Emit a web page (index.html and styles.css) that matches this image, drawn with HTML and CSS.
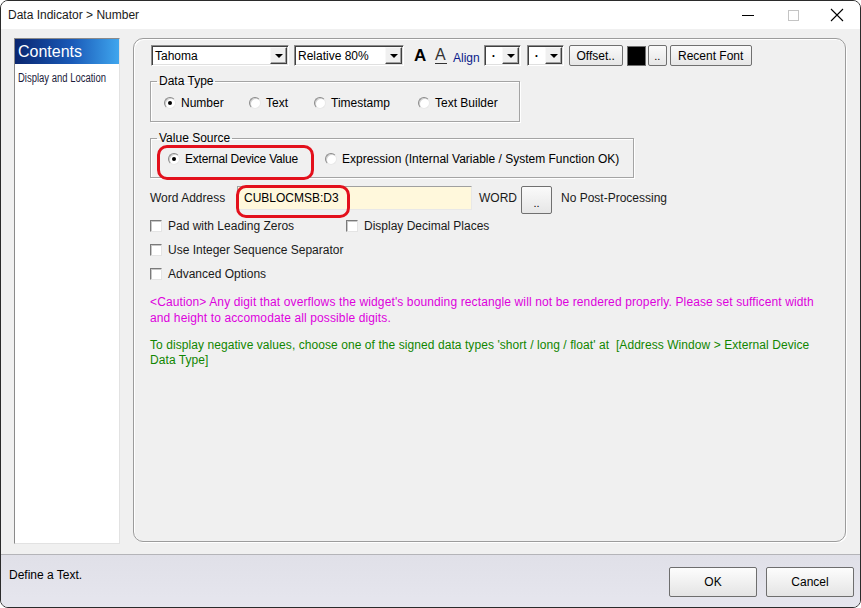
FILE: index.html
```html
<!DOCTYPE HTML>
<html>

<head>
  <meta charset="utf-8">
  <link rel="stylesheet" href="styles.css">
</head>

<body>
<div class="window">
  <div class="titlebar">
    <span class="title">Data Indicator &gt; Number</span>
    <div class="caption-btns">
      <svg class="cap cap-min" width="14" height="14" viewBox="0 0 14 14"><path d="M1 7.5h12" stroke="#000" stroke-width="1"/></svg>
      <svg class="cap cap-max" width="14" height="14" viewBox="0 0 14 14"><rect x="2.5" y="2.5" width="10" height="10" fill="none" stroke="#c4c4c4"/></svg>
      <svg class="cap cap-close" width="14" height="14" viewBox="0 0 14 14"><path d="M1 1l12 12M13 1L1 13" stroke="#000" stroke-width="1.1"/></svg>
    </div>
  </div>

  <div class="main">
    <div class="side">
      <div class="side-head">Contents</div>
      <div class="side-item"><span>Display and Location</span></div>
    </div>

    <div class="panel">
      <div class="toolbar">
        <div class="combo combo-font"><span class="combo-text">Tahoma</span><span class="drop"></span></div>
        <div class="combo combo-size"><span class="combo-text">Relative 80%</span><span class="drop"></span></div>
        <span class="glyph-bold">A</span>
        <span class="glyph-under">A</span>
        <span class="align-label">Align</span>
        <div class="combo combo-align"><span class="combo-text">·</span><span class="drop"></span></div>
        <div class="combo combo-align second"><span class="combo-text">·</span><span class="drop"></span></div>
        <button class="btn btn-offset">Offset..</button>
        <span class="swatch"></span>
        <button class="btn btn-dots">..</button>
        <button class="btn btn-recent">Recent Font</button>
      </div>

      <fieldset class="group group-type">
        <legend>Data Type</legend>
        <div class="radios radios-type">
          <label class="radio"><span class="dot checked"></span>Number</label>
          <label class="radio"><span class="dot"></span>Text</label>
          <label class="radio"><span class="dot"></span>Timestamp</label>
          <label class="radio"><span class="dot"></span>Text Builder</label>
        </div>
      </fieldset>

      <fieldset class="group group-source">
        <legend>Value Source</legend>
        <div class="radios radios-source">
          <label class="radio marked"><span class="dot checked"></span>External Device Value</label>
          <label class="radio"><span class="dot"></span>Expression (Internal Variable / System Function OK)</label>
        </div>
      </fieldset>

      <div class="addr-row">
        <span class="addr-label">Word Address</span>
        <div class="addr-input">CUBLOCMSB:D3</div>
        <span class="addr-type">WORD</span>
        <button class="btn btn-addr">..</button>
        <span class="addr-post">No Post-Processing</span>
      </div>

      <div class="check-row">
        <label class="check first"><span class="box"></span>Pad with Leading Zeros</label>
        <label class="check"><span class="box"></span>Display Decimal Places</label>
      </div>
      <div class="check-row">
        <label class="check"><span class="box"></span>Use Integer Sequence Separator</label>
      </div>
      <div class="check-row">
        <label class="check"><span class="box"></span>Advanced Options</label>
      </div>

      <p class="note caution">&lt;Caution&gt; Any digit that overflows the widget's bounding rectangle will not be rendered properly. Please set sufficent width<br>and height to accomodate all possible digits.</p>
      <p class="note hint">To display negative values, choose one of the signed data types 'short / long / float' at&nbsp; [Address Window &gt; External Device<br>Data Type]</p>
    </div>
  </div>

  <div class="statusbar">
    <span class="status-text">Define a Text.</span>
    <div class="dlg-btns">
      <button class="dlg-btn">OK</button>
      <button class="dlg-btn">Cancel</button>
    </div>
  </div>
</div>
</body>

</html>
```

FILE: styles.css
```css
* {
  box-sizing: border-box;
}

html, body {
  margin: 0;
  padding: 0;
  width: 861px;
  height: 608px;
  overflow: hidden;
  background: #fff;
}

body {
  font-family: "Liberation Sans", Arial, sans-serif;
  font-size: 12px;
  color: #000;
}

.window {
  width: 861px;
  height: 608px;
  border: 1px solid #2b2b2b;
  border-radius: 8px;
  background: #f0f0f0;
  display: flex;
  flex-direction: column;
  overflow: hidden;
}

/* заголовок окна */
.titlebar {
  height: 28px;
  flex: none;
  background: #fff;
  display: flex;
  align-items: center;
  padding-left: 7px;
}

.title {
  font-size: 12px;
  color: #1a1a1a;
}

.caption-btns {
  margin-left: auto;
  display: flex;
  align-items: center;
}

.cap-min {
  margin-right: 31px;
}

.cap-max {
  margin-right: 30px;
}

.cap-close {
  margin-right: 16px;
}

/* основная часть */
.main {
  flex: 1;
  display: flex;
  padding: 9px 0 0 13px;
}

.side {
  width: 106px;
  height: 506px;
  background: #fff;
  border: 1px solid;
  border-color: #8a8a8a #e2e2e2 #e2e2e2 #8a8a8a;
}

.side-head {
  height: 25px;
  background: linear-gradient(to right, #0a2670, #1a5ab8 55%, #3fa6ee);
  color: #fff;
  font-size: 16px;
  line-height: 25px;
  padding-left: 3px;
}

.side-item {
  font-size: 12px;
  color: #1c1c3c;
  padding: 7px 0 0 3px;
  line-height: 14px;
  white-space: nowrap;
}

/* узкий шрифт: сжимаем по горизонтали */
.side-item span {
  display: inline-block;
  transform: scaleX(0.79);
  transform-origin: left center;
}

.panel {
  width: 713px;
  height: 504px;
  margin-left: 13px;
  border: 1px solid #9c9c9c;
  border-radius: 10px;
  box-shadow: 1px 1px 0 #fff, inset 1px 1px 0 #fff;
  padding: 6px 0 0 16px;
}

/* панель шрифта */
.toolbar {
  display: flex;
  align-items: center;
  height: 21px;
  margin-left: 1px;
}

.combo {
  height: 21px;
  background: #fff;
  border: 1px solid;
  border-color: #8c8c8c #fff #fff #8c8c8c;
  box-shadow: inset 1px 1px 0 #404040, inset -1px -1px 0 #e0e0e0;
  display: flex;
  align-items: center;
  padding: 1px;
}

.combo-text {
  flex: 1;
  padding-left: 2px;
  font-size: 12px;
  white-space: nowrap;
  overflow: hidden;
}

.drop {
  width: 17px;
  height: 17px;
  background: #f0f0f0;
  border: 1px solid;
  border-color: #f8f8f8 #404040 #404040 #f8f8f8;
  box-shadow: inset -1px -1px 0 #a0a0a0;
  position: relative;
}

.drop::after {
  content: "";
  position: absolute;
  left: 4px;
  top: 6px;
  border-left: 4px solid transparent;
  border-right: 4px solid transparent;
  border-top: 4px solid #000;
}

.combo-font {
  width: 138px;
}

.combo-size {
  width: 110px;
  margin-left: 5px;
}

.combo-align {
  width: 37px;
  margin-left: 4px;
}

.combo-align .combo-text {
  padding-left: 6px;
  font-weight: bold;
}

.combo-align.second {
  margin-left: 6px;
}

.glyph-bold {
  font-weight: bold;
  font-size: 17px;
  margin-left: 10px;
  width: 12px;
}

.glyph-under {
  font-size: 16px;
  margin-left: 9px;
  width: 12px;
  line-height: 16px;
  border-bottom: 1px solid #333;
  color: #333;
}

.align-label {
  color: #0a1a8a;
  margin-left: 6px;
  padding-top: 4px;
}

.btn {
  font-family: "Liberation Sans", Arial, sans-serif;
  font-size: 12px;
  height: 21px;
  padding: 0;
  background: linear-gradient(#fafafa, #e6e6e6);
  border: 1px solid #707070;
  border-radius: 2px;
  color: #000;
}

.btn-offset {
  width: 54px;
  margin-left: 5px;
}

.swatch {
  width: 19px;
  height: 20px;
  background: #000;
  border: 1px solid #707070;
  margin-left: 4px;
}

.btn-dots {
  width: 19px;
  margin-left: 2px;
  font-size: 11px;
}

.btn-recent {
  width: 82px;
  margin-left: 3px;
}

/* группы */
.group {
  margin: 0;
  padding: 0;
  border: 1px solid #a4a4a4;
  box-shadow: inset 1px 1px 0 #fff, 1px 1px 0 #fff;
}

.group legend {
  margin-left: 6px;
  padding: 0 2px;
  line-height: 14px;
  font-size: 12px;
}

.group-type {
  width: 370px;
  margin-top: 8px;
  padding: 7px 0 10px 0;
}

.group-type .radios {
  padding-left: 13px;
}

.group-source {
  width: 484px;
  margin-top: 9px;
  padding: 6px 0 10px 0;
}

.group-source .radios {
  padding-left: 17px;
}

.radios {
  display: grid;
  height: 16px;
  align-items: center;
}

.radios-type {
  grid-template-columns: 85px 65px 104px auto;
}

.radios-source {
  grid-template-columns: 157px auto;
}

.radio {
  display: flex;
  align-items: center;
  white-space: nowrap;
  line-height: 16px;
}

.dot {
  width: 12px;
  height: 12px;
  border-radius: 50%;
  background: #fff;
  border: 1px solid;
  border-color: #8a8a8a #e8e8e8 #e8e8e8 #8a8a8a;
  box-shadow: inset 1px 1px 0 #d0d0d0;
  margin-right: 5px;
  position: relative;
  flex: none;
}

.dot.checked::after {
  content: "";
  position: absolute;
  left: 3px;
  top: 3px;
  width: 4px;
  height: 4px;
  border-radius: 50%;
  background: #000;
}

.radio.marked {
  position: relative;
  letter-spacing: -0.2px;
}

.radio.marked::after {
  content: "";
  position: absolute;
  left: -11px;
  top: -6px;
  width: 151px;
  height: 29px;
  border: 3px solid #e3101c;
  border-radius: 10px;
}

/* адрес */
.addr-row {
  display: flex;
  align-items: flex-start;
  margin-top: 8px;
  height: 28px;
}

.addr-label,
.addr-type,
.addr-post {
  line-height: 24px;
  color: #1a1a1a;
}

.addr-label {
  width: 87px;
}

.addr-input {
  width: 235px;
  height: 24px;
  background: #fff8dc;
  border: 1px solid;
  border-color: #a0a0a0 #e8e8e8 #e8e8e8 #a0a0a0;
  line-height: 22px;
  padding-left: 6px;
  position: relative;
}

.addr-input::after {
  content: "";
  position: absolute;
  left: -2px;
  top: -2px;
  width: 108px;
  height: 27px;
  border: 3px solid #e3101c;
  border-radius: 10px;
}

.addr-type {
  width: 42px;
  margin-left: 7px;
}

.btn-addr {
  width: 31px;
  height: 28px;
  font-size: 11px;
  padding-top: 6px;
}

.addr-post {
  margin-left: 9px;
}

/* флажки */
.check-row {
  height: 24px;
  display: flex;
  align-items: center;
}

.check {
  display: flex;
  align-items: center;
  color: #1a1a1a;
}

.check.first {
  width: 196px;
}

.box {
  width: 12px;
  height: 12px;
  background: #fff;
  border: 1px solid;
  border-color: #7a7a7a #e4e4e4 #e4e4e4 #7a7a7a;
  box-shadow: inset 1px 1px 0 #c8c8c8;
  margin-right: 6px;
}

/* примечания */
.note {
  margin: 0;
  font-size: 12px;
  letter-spacing: 0.12px;
}

.caution {
  color: #dd00dd;
  margin-top: 8px;
  line-height: 16px;
}

.hint {
  color: #108600;
  margin-top: 12px;
  line-height: 15px;
  letter-spacing: 0.07px;
}

/* нижняя панель */
.statusbar {
  height: 53px;
  flex: none;
  margin-top: 1px;
  background: linear-gradient(#e0e0e8, #e6e6ee);
  border-top: 1px solid #b4b4b8;
  display: flex;
  align-items: flex-start;
  padding: 12px 6px 0 8px;
}

.status-text {
  line-height: 14px;
  padding-top: 1px;
}

.dlg-btns {
  margin-left: auto;
  display: flex;
  gap: 9px;
}

.dlg-btn {
  width: 88px;
  height: 30px;
  font-family: "Liberation Sans", Arial, sans-serif;
  font-size: 12px;
  background: linear-gradient(#fdfdfd, #e4e4e4);
  border: 1px solid #6e6e6e;
  border-radius: 2px;
  color: #000;
}
```
